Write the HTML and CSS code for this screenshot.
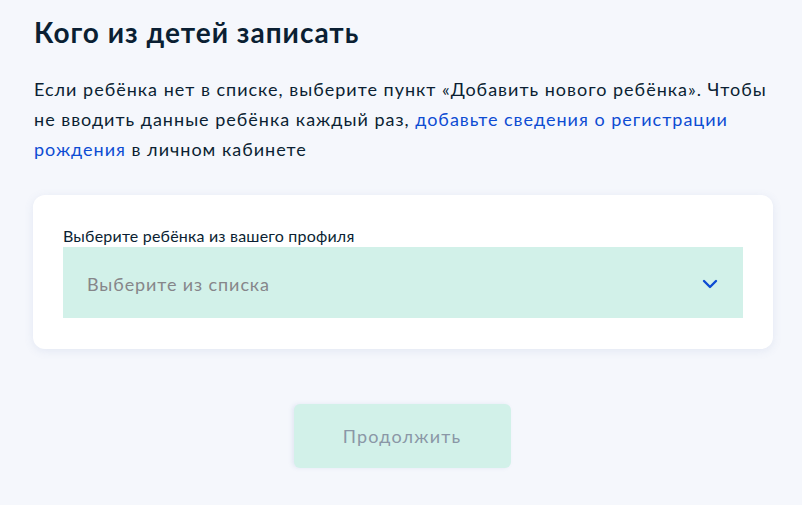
FILE: index.html
```html
<!DOCTYPE html>
<html>
<head>
  <meta charset="utf-8" />
  <title>Кого из детей записать</title>
  <link rel="stylesheet" href="styles.css">
</head>
<body>
  <div class="page">
    <h1 class="title">Кого из детей записать</h1>
    <p class="intro">
      Если ребёнка нет в списке, выберите пункт «Добавить нового ребёнка». Чтобы не вводить данные ребёнка каждый раз,
      <a href="#" class="link">добавьте сведения о регистрации рождения</a> в личном кабинете
    </p>

    <div class="card">
      <label class="field-label">Выберите ребёнка из вашего профиля</label>
      <div class="select">
        <span class="select-placeholder">Выберите из списка</span>
        <svg class="select-arrow" width="16" height="10" viewBox="0 0 16 10">
          <path d="M2 2 L8 8 L14 2" fill="none" stroke="#0d4cd3" stroke-width="2.4" stroke-linecap="round" stroke-linejoin="round"/>
        </svg>
      </div>
    </div>

    <div class="actions">
      <button class="btn-continue" disabled>Продолжить</button>
    </div>
  </div>
</body>
</html>
```

FILE: styles.css
```css
* {
  margin: 0;
  padding: 0;
  box-sizing: border-box;
}

body {
  font-family: Lato, 'Noto Sans', Arial, sans-serif;
  background: #f5f7fc;
  color: #0b1f33;
  min-height: 100vh;
}

.page {
  width: 740px;
  margin-left: 33px;
  padding-top: 14px;
}

.title {
  font-size: 28px;
  font-weight: 700;
  line-height: 36px;
  letter-spacing: 1px;
  margin-left: 1px;
}

.intro {
  margin-top: 24px;
  margin-left: 1px;
  font-size: 18px;
  line-height: 30px;
  letter-spacing: 1px;
  color: #0b1f33;
}

.link {
  color: #0d4cd3;
  text-decoration: none;
}

.card {
  margin-top: 31px;
  background: #fff;
  border-radius: 12px;
  box-shadow: 0 2px 10px rgba(102, 124, 179, 0.12);
  padding: 30px 30px 31px;
}

.field-label {
  display: block;
  font-size: 16px;
  line-height: 22px;
  letter-spacing: 0.2px;
  color: #0b1f33;
}

.select {
  height: 71px;
  background: #d2f1e9;
  display: flex;
  align-items: center;
  justify-content: space-between;
  padding: 0 25px 0 24px;
}

.select-placeholder {
  font-size: 18px;
  letter-spacing: 0.9px;
  color: #86868a;
  margin-top: 2px;
}

.select-arrow {
  margin-top: 2px;
}

.actions {
  display: flex;
  justify-content: center;
  margin-top: 55px;
  padding-right: 2px;
}

.btn-continue {
  width: 217px;
  height: 64px;
  border: none;
  border-radius: 6px;
  background: #d2f1e9;
  color: #8a97a6;
  font-family: inherit;
  font-size: 18px;
  letter-spacing: 1.2px;
  box-shadow: -2px 0 4px rgba(102, 124, 179, 0.12);
}
```
